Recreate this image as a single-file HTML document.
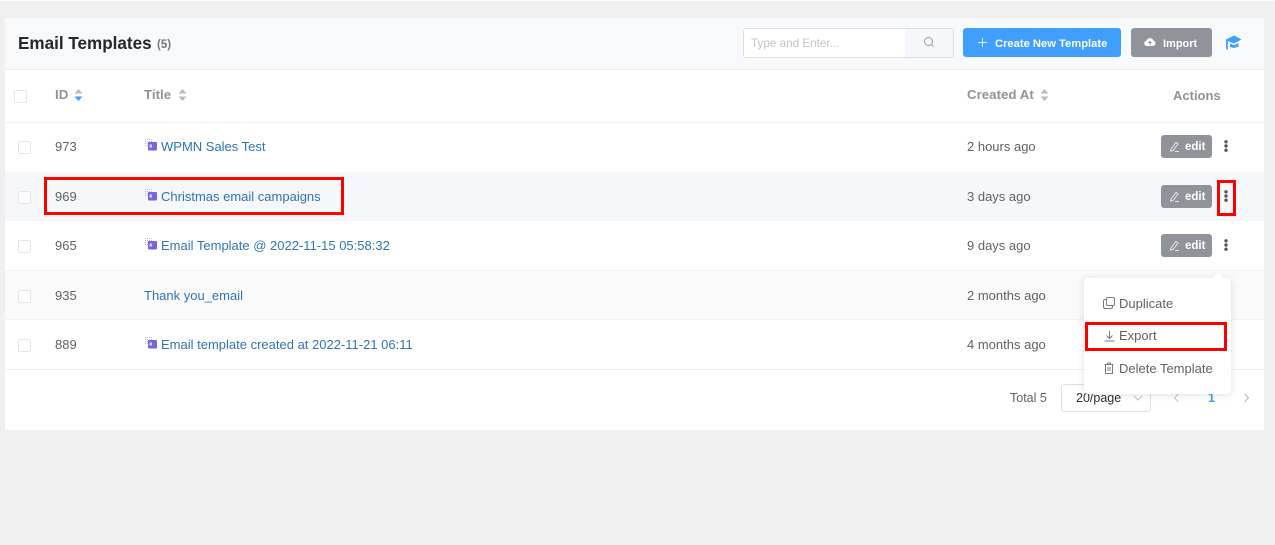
<!DOCTYPE html>
<html><head><meta charset="utf-8"><style>
html,body{margin:0;padding:0}
body{width:1275px;height:545px;overflow:hidden;background:#f0f0f0;font-family:"Liberation Sans",sans-serif;position:relative;color:#606266}
.a,body>div,body>svg{position:absolute}
.t{white-space:nowrap;font-size:13px;line-height:18px}
.l{color:#2f75b5}
.h{color:#909399;font-weight:bold;font-size:13.3px}
.cb{width:11px;height:11px;border:1px solid #e4e6ea;border-radius:2px;background:#fff;left:18px}
.ed{left:1161px;width:51px;height:23px;background:#909399;border-radius:3px;color:#fff;font-size:11.5px;font-weight:bold;line-height:23px}
.ed span{position:absolute;left:24px;top:1px}
.red{border:3px solid #f00;box-sizing:border-box}
.dot{left:1224px;width:4px;height:12px}
</style></head><body>
<div style="left:0;top:0;width:1275px;height:1px;background:#fff"></div>
<div style="left:5px;top:18px;width:1259px;height:412px;background:#fff"></div>
<div style="left:5px;top:18px;width:1259px;height:51px;background:#f8f9fb;border-bottom:1px solid #ebeef5"></div>
<div style="left:5px;top:122px;width:1259px;height:1px;background:#f0f2f5"></div>
<div style="left:5px;top:172px;width:1259px;height:49px;background:#f5f7fa"></div>
<div style="left:5px;top:270px;width:1259px;height:1px;background:#f0f2f5"></div>
<div style="left:5px;top:271px;width:1259px;height:48px;background:#fafafa"></div>
<div style="left:5px;top:319px;width:1259px;height:1px;background:#f0f2f5"></div>
<div style="left:5px;top:369px;width:1259px;height:1px;background:#ebeef5"></div>

<div class="t" style="left:18px;top:33px;font-size:17.1px;line-height:22px;font-weight:bold;color:#23282d">Email Templates</div>
<div class="t" style="left:157px;top:36px;font-size:11.5px;font-weight:bold;color:#777">(5)</div>

<div style="left:743px;top:28px;width:209px;height:28px;border:1px solid #dcdfe6;border-radius:3px;background:#f5f7fa"></div>
<div style="left:744px;top:29px;width:161px;height:28px;background:#fff;border-radius:3px 0 0 3px"></div>
<div class="t" style="left:751px;top:35px;font-size:11.7px;color:#c0c4cc">Type and Enter...</div>
<svg style="left:923px;top:36px" width="12" height="12" viewBox="0 0 12 12" fill="none" stroke="#9a9ea6"><circle cx="5.500" cy="5.500" r="4"/><path d="M8.500 8.500l2 2"/></svg>

<div style="left:963px;top:28px;width:158px;height:29px;background:#409eff;border-radius:3px"></div>
<svg style="left:977px;top:37px" width="11" height="11" viewBox="0 0 11 11" stroke="#e8f3ff" fill="none"><path d="M5.500 1v9M1 5.500h9"/></svg>
<div class="t" style="left:995px;top:35px;font-size:11.2px;font-weight:bold;color:#fff">Create New Template</div>

<div style="left:1131px;top:28px;width:81px;height:29px;background:#909399;border-radius:3px"></div>
<svg style="left:1144px;top:37px" width="12" height="10" viewBox="0 0 12 10"><path d="M3 9a2.600 2.600 0 0 1-.4-5.200A3.500 3.500 0 0 1 9.300 3.500 2.800 2.800 0 0 1 9 9z" fill="#fff"/><path d="M6 8V4.500M4.500 6L6 4.500 7.500 6" stroke="#909399" fill="none"/></svg>
<div class="t" style="left:1163px;top:35px;font-size:11px;font-weight:bold;color:#fff">Import</div>

<svg style="left:1225px;top:35px" width="17" height="15" viewBox="0 0 17 15"><path d="M1 4.500L9 .5 16.500 4.500 9 8.500 3 6z" fill="#409eff"/><path d="M5 8.500L9 10.300 13.500 8V11.500L9 13 5 12z" fill="#409eff"/><path d="M1 4.500h1.800v10H1z" fill="#409eff"/></svg>

<div class="cb" style="left:14px;top:90px"></div>
<div class="t h" style="left:55px;top:86px">ID</div>
<svg style="left:74px;top:89px" width="9" height="12" viewBox="0 0 9 12"><path d="M4.500 0L8.500 4.500H.5z" fill="#b4bccc"/><path d="M4.500 12L8.500 7.500H.5z" fill="#409eff"/></svg>
<div class="t h" style="left:144px;top:86px">Title</div>
<svg style="left:178px;top:89px" width="9" height="12" viewBox="0 0 9 12" fill="#b4bccc"><path d="M4.500 0L8.500 4.500H.5zM4.500 12L8.500 7.500H.5z"/></svg>
<div class="t h" style="left:967px;top:86px">Created At</div>
<svg style="left:1040px;top:89px" width="9" height="12" viewBox="0 0 9 12" fill="#b4bccc"><path d="M4.500 0L8.500 4.500H.5zM4.500 12L8.500 7.500H.5z"/></svg>
<div class="t h" style="left:1173px;top:87px;font-size:13px">Actions</div>

<!-- rows -->
<div class="cb" style="top:141px"></div>
<div class="t" style="left:55px;top:138px">973</div>
<svg style="left:145px;top:139px" width="13" height="13" viewBox="0 0 13 13"><path d="M0 .5h8M0 2.500h8M0 4.500h3M0 6.500h3" stroke="#bfb1f2" stroke-dasharray="1 1" fill="none"/><rect x="3" y="3" width="9" height="8.500" rx="1" fill="#7b62e2"/><rect x="4.500" y="5.500" width="2.500" height="3" fill="#ded6fa"/></svg>
<div class="t l" style="left:161px;top:138px">WPMN Sales Test</div>
<div class="t" style="left:967px;top:138px">2 hours ago</div>
<div class="ed" style="top:135px"><svg style="position:absolute;left:8px;top:6px" width="11" height="11" viewBox="0 0 11 11" fill="none" stroke="#e5e6e8"><path d="M2 8L7 1.500l2 1.500L4 9.500 1.500 10zM6 10.500h4"/></svg><span>edit</span></div>
<svg class="dot" style="top:140px" viewBox="0 0 4 12" fill="#55585e"><circle cx="2" cy="1.800" r="1.700"/><circle cx="2" cy="6" r="1.700"/><circle cx="2" cy="10.200" r="1.700"/></svg>

<div class="cb" style="top:191px"></div>
<div class="t" style="left:55px;top:188px">969</div>
<svg style="left:145px;top:189px" width="13" height="13" viewBox="0 0 13 13"><path d="M0 .5h8M0 2.500h8M0 4.500h3M0 6.500h3" stroke="#bfb1f2" stroke-dasharray="1 1" fill="none"/><rect x="3" y="3" width="9" height="8.500" rx="1" fill="#7b62e2"/><rect x="4.500" y="5.500" width="2.500" height="3" fill="#ded6fa"/></svg>
<div class="t l" style="left:161px;top:188px">Christmas email campaigns</div>
<div class="t" style="left:967px;top:188px">3 days ago</div>
<div class="ed" style="top:185px"><svg style="position:absolute;left:8px;top:6px" width="11" height="11" viewBox="0 0 11 11" fill="none" stroke="#e5e6e8"><path d="M2 8L7 1.500l2 1.500L4 9.500 1.500 10zM6 10.500h4"/></svg><span>edit</span></div>
<svg class="dot" style="top:190px" viewBox="0 0 4 12" fill="#55585e"><circle cx="2" cy="1.800" r="1.700"/><circle cx="2" cy="6" r="1.700"/><circle cx="2" cy="10.200" r="1.700"/></svg>

<div class="cb" style="top:240px"></div>
<div class="t" style="left:55px;top:237px">965</div>
<svg style="left:145px;top:238px" width="13" height="13" viewBox="0 0 13 13"><path d="M0 .5h8M0 2.500h8M0 4.500h3M0 6.500h3" stroke="#bfb1f2" stroke-dasharray="1 1" fill="none"/><rect x="3" y="3" width="9" height="8.500" rx="1" fill="#7b62e2"/><rect x="4.500" y="5.500" width="2.500" height="3" fill="#ded6fa"/></svg>
<div class="t l" style="left:161px;top:237px">Email Template @ 2022-11-15 05:58:32</div>
<div class="t" style="left:967px;top:237px">9 days ago</div>
<div class="ed" style="top:234px"><svg style="position:absolute;left:8px;top:6px" width="11" height="11" viewBox="0 0 11 11" fill="none" stroke="#e5e6e8"><path d="M2 8L7 1.500l2 1.500L4 9.500 1.500 10zM6 10.500h4"/></svg><span>edit</span></div>
<svg class="dot" style="top:239px" viewBox="0 0 4 12" fill="#55585e"><circle cx="2" cy="1.800" r="1.700"/><circle cx="2" cy="6" r="1.700"/><circle cx="2" cy="10.200" r="1.700"/></svg>

<div class="cb" style="top:290px"></div>
<div class="t" style="left:55px;top:287px">935</div>
<div class="t l" style="left:144px;top:287px">Thank you_email</div>
<div class="t" style="left:967px;top:287px">2 months ago</div>

<div class="cb" style="top:339px"></div>
<div class="t" style="left:55px;top:336px">889</div>
<svg style="left:145px;top:337px" width="13" height="13" viewBox="0 0 13 13"><path d="M0 .5h8M0 2.500h8M0 4.500h3M0 6.500h3" stroke="#bfb1f2" stroke-dasharray="1 1" fill="none"/><rect x="3" y="3" width="9" height="8.500" rx="1" fill="#7b62e2"/><rect x="4.500" y="5.500" width="2.500" height="3" fill="#ded6fa"/></svg>
<div class="t l" style="left:161px;top:336px">Email template created at 2022-11-21 06:11</div>
<div class="t" style="left:967px;top:336px">4 months ago</div>

<!-- footer -->
<div class="t" style="left:1010px;top:389px;font-size:12.500px">Total 5</div>
<div style="left:1061px;top:384px;width:88px;height:26px;border:1px solid #dcdfe6;border-radius:3px;background:#fff"></div>
<div class="t" style="left:1076px;top:389px;font-size:12.500px;color:#303133">20/page</div>
<svg style="left:1133px;top:394px" width="10" height="8" viewBox="0 0 10 8" fill="none" stroke="#c0c4cc"><path d="M1 2l4 4 4-4"/></svg>
<svg style="left:1173px;top:393px" width="7" height="10" viewBox="0 0 7 10" fill="none" stroke="#c0c4cc"><path d="M5.500 1L1.500 5l4 4"/></svg>
<div class="t" style="left:1208px;top:389px;font-size:12.500px;font-weight:bold;color:#409eff">1</div>
<svg style="left:1243px;top:393px" width="7" height="10" viewBox="0 0 7 10" fill="none" stroke="#b0b4bb"><path d="M1.500 1l4 4-4 4"/></svg>

<!-- dropdown -->
<div style="left:1084px;top:278px;width:147px;height:116px;background:#fff;border-radius:4px;box-shadow:0 1px 8px rgba(0,0,0,.12)"></div>
<div style="left:1214px;top:274px;width:8px;height:8px;background:#fff;transform:rotate(45deg)"></div>
<svg style="left:1103px;top:297px" width="12" height="12" viewBox="0 0 12 12" fill="none" stroke="#777b82"><rect x="3.500" y=".5" width="8" height="8" rx="1.500"/><path d="M3 2.500H2A1.500 1.500 0 0 0 .5 4v6A1.500 1.500 0 0 0 2 11.500h6A1.500 1.500 0 0 0 9.500 10V9"/></svg>
<div class="t" style="left:1119px;top:295px">Duplicate</div>
<svg style="left:1104px;top:330px" width="11" height="12" viewBox="0 0 11 12" fill="none" stroke="#777b82"><path d="M5.500 1v7M2.500 5.500l3 3 3-3M.5 11h10"/></svg>
<div class="t" style="left:1119px;top:327px">Export</div>
<svg style="left:1104px;top:362px" width="10" height="12" viewBox="0 0 10 12" fill="none" stroke="#777b82"><path d="M.5 2.500h9M3.500 2.500V1h3v1.500M1.500 2.500v9h7v-9M4 5v4M6 5v4"/></svg>
<div class="t" style="left:1119px;top:360px">Delete Template</div>

<!-- red -->
<div class="red" style="left:44px;top:177px;width:300px;height:38px"></div>
<div class="red" style="left:1217px;top:180px;width:19px;height:36px"></div>
<div class="red" style="left:1085px;top:322px;width:142px;height:29px"></div>
</body></html>
